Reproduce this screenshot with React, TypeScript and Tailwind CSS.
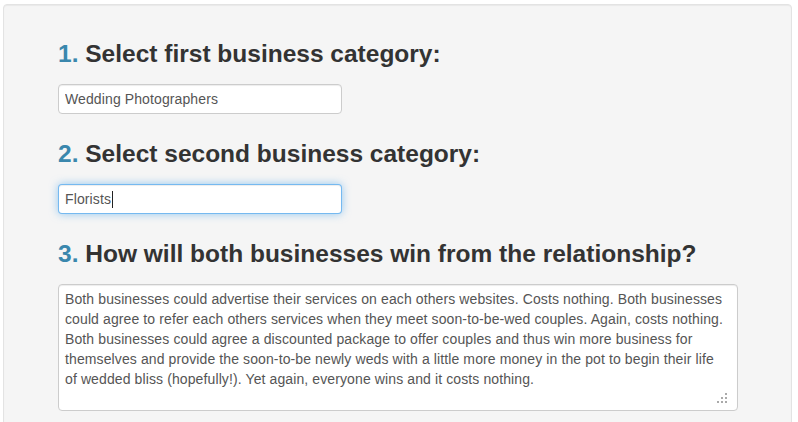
import React from "react"

const answer =
  "Both businesses could advertise their services on each others websites. Costs nothing. Both businesses could agree to refer each others services when they meet soon-to-be-wed couples. Again, costs nothing. Both businesses could agree a discounted package to offer couples and thus win more business for themselves and provide the soon-to-be newly weds with a little more money in the pot to begin their life of wedded bliss (hopefully!). Yet again, everyone wins and it costs nothing."

function StepHeading({ num, text }: { num: number; text: string }) {
  return (
    <h3 className="my-[10px] text-[24.5px] leading-[40px] font-bold text-[#333]">
      <span className="text-[#3a87ad]">{num}.</span> {text}
    </h3>
  )
}

// dotted resize grip like the old windows textarea
function ResizeGrip() {
  const dots = [
    [8, 0],
    [4, 4],
    [8, 4],
    [0, 8],
    [4, 8],
    [8, 8],
  ]
  return (
    <svg width="10" height="10" viewBox="0 0 10 10" className="pointer-events-none absolute right-[11px] bottom-[8px]">
      {dots.map(([x, y], i) => (
        <rect key={i} x={x} y={y} width="2" height="2" fill="#aaa" />
      ))}
    </svg>
  )
}

export default function App() {
  return (
    <div className="min-h-[422px] bg-white pt-[4px] pl-[3px] font-[family-name:'Liberation_Sans',Arial,sans-serif]">
      <div className="w-[789px] rounded-[4px] border border-[#e3e3e3] bg-[#f5f5f5] pt-[19px] pl-[54px] pb-[30px] shadow-[inset_0_1px_1px_rgba(0,0,0,0.05)]">
        {/* Step 1 */}
        <StepHeading num={1} text="Select first business category:" />
        <input
          type="text"
          readOnly
          value="Wedding Photographers"
          className="mb-[20px] block h-[30px] w-[284px] rounded-[4px] border border-[#ccc] bg-white px-[6px] py-[4px] text-[14px] leading-[20px] tracking-[0.11px] text-[#555] shadow-[inset_0_1px_1px_rgba(0,0,0,0.075)] outline-none"
        />

        {/* Step 2 - focused field with caret */}
        <StepHeading num={2} text="Select second business category:" />
        <div className="mb-[20px] flex h-[30px] w-[284px] items-center rounded-[4px] border border-[rgba(82,168,236,0.8)] bg-white px-[6px] text-[14px] leading-[20px] tracking-[0.11px] text-[#555] shadow-[inset_0_1px_1px_rgba(0,0,0,0.075),0_0_8px_rgba(82,168,236,0.6)]">
          <span>Florists</span>
          <span className="ml-[1px] h-[17px] w-px bg-[#222]" />
        </div>

        {/* Step 3 */}
        <StepHeading num={3} text="How will both businesses win from the relationship?" />
        <div className="relative w-[680px]">
          <textarea
            readOnly
            defaultValue={answer}
            className="block h-[127px] w-[680px] resize-none rounded-[4px] border border-[#ccc] bg-white py-[4px] pr-[12px] pl-[6px] text-[14px] leading-[20px] tracking-[0.11px] text-[#555] shadow-[inset_0_1px_1px_rgba(0,0,0,0.075)] outline-none"
          />
          <ResizeGrip />
        </div>
      </div>
    </div>
  )
}
